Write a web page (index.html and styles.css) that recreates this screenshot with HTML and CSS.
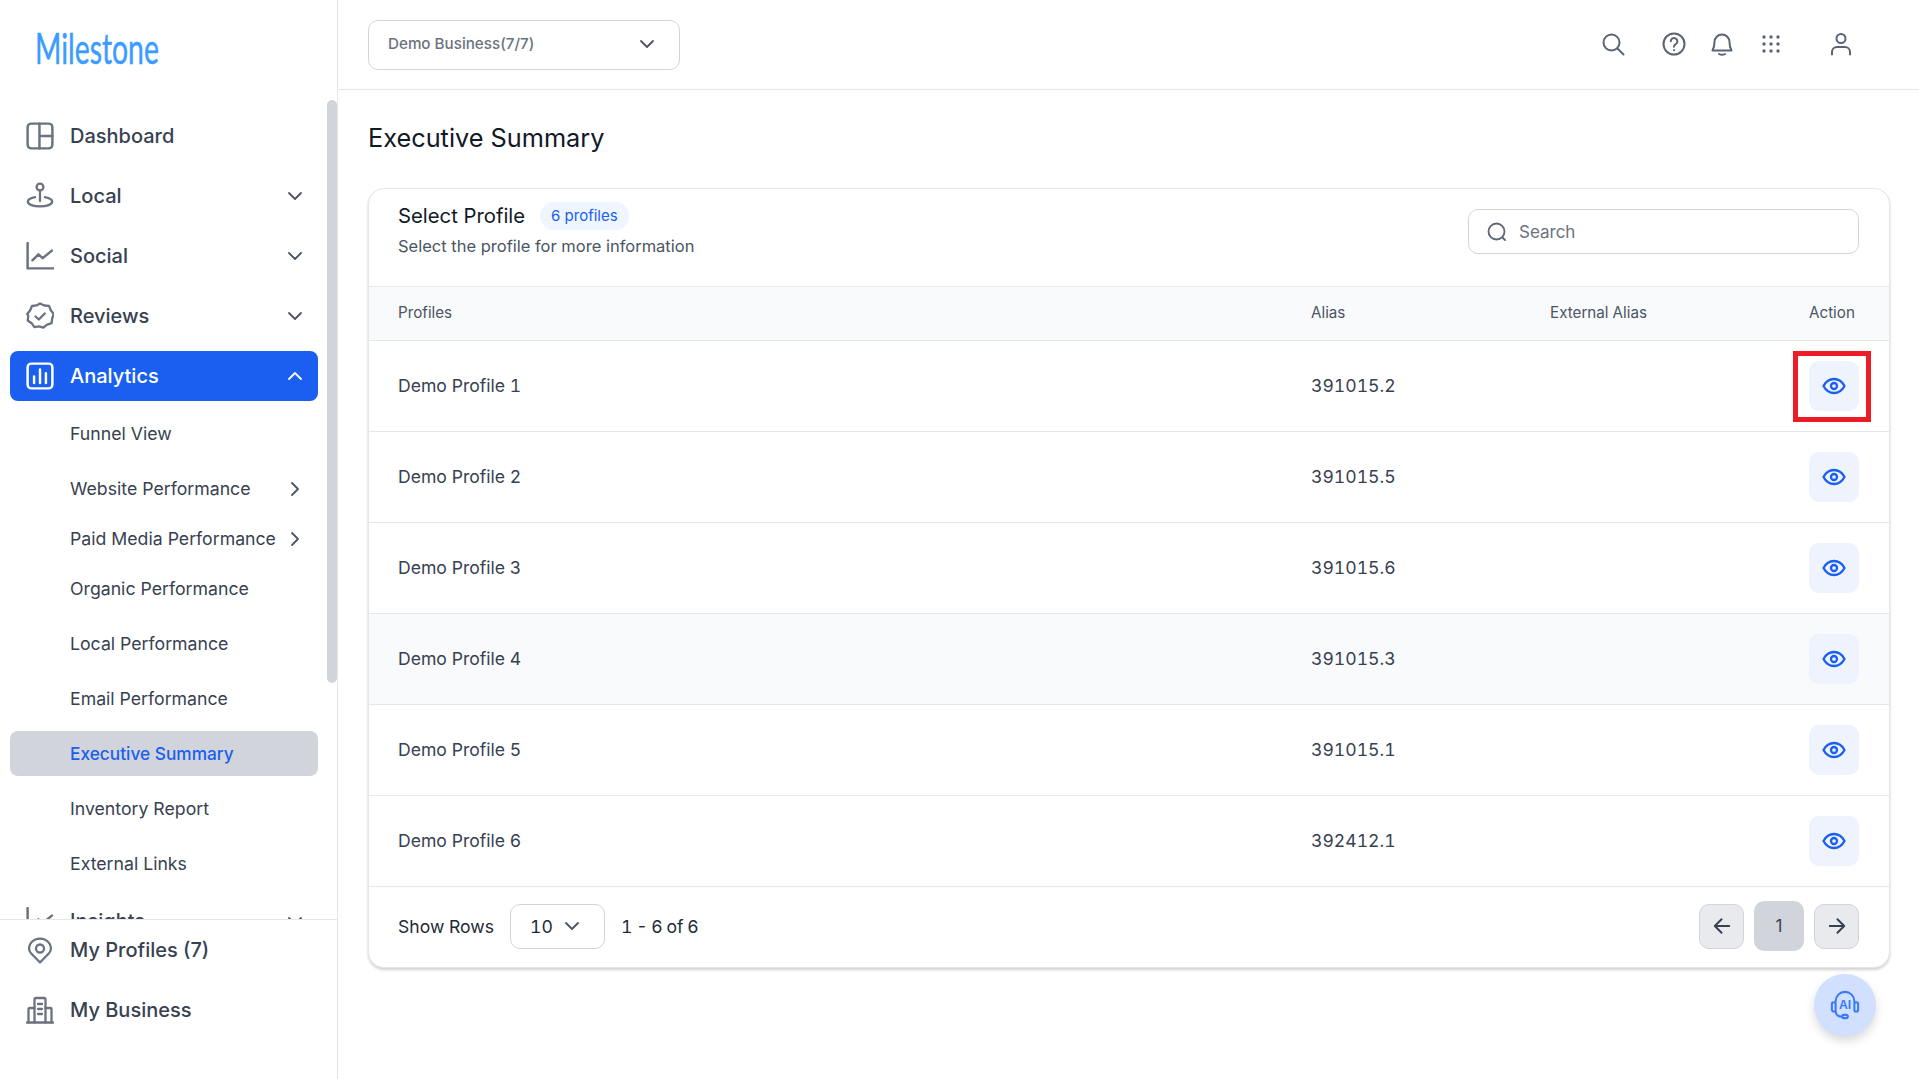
FILE: index.html
```html
<!DOCTYPE html>
<html lang="en">
<head>
    <meta charset="UTF-8">
    <meta name="viewport" content="width=device-width, initial-scale=1.0">
    <title>Executive Summary</title>
    <link rel="stylesheet" href="styles.css">
</head>
<body>
    <aside class="sidebar">
        <div class="logo"><span>Milestone</span></div>
        <nav class="nav">
            <a class="nav-item">
                <svg class="nav-icon" viewBox="0 0 26 26"><rect x="1.5" y="1.5" width="23" height="23" rx="3.5"/><path d="M12.5 1.5v23M12.5 13h12"/></svg>
                <span>Dashboard</span>
            </a>
            <a class="nav-item">
                <svg class="nav-icon" viewBox="0 0 28 28"><circle cx="14" cy="5" r="3.4"/><path d="M14 8.5V19"/><path d="M9 15.2c-4.400.8-7.200 2.400-7.200 4.600 0 2.600 5.400 4.600 12.200 4.600s12.200-2 12.200-4.600c0-2.200-2.800-3.800-7.200-4.600"/></svg>
                <span>Local</span>
                <svg class="chev" viewBox="0 0 16 16"><path d="M2 5l6 6 6-6"/></svg>
            </a>
            <a class="nav-item">
                <svg class="nav-icon" viewBox="0 0 26 26"><path d="M1.500 1v23.500H26"/><path d="M6 17l5.500-5.500 4 3.500L24 8"/></svg>
                <span>Social</span>
                <svg class="chev" viewBox="0 0 16 16"><path d="M2 5l6 6 6-6"/></svg>
            </a>
            <a class="nav-item">
                <svg class="nav-icon" viewBox="0 0 28 28"><path d="M14 1.500l4.300 2 4.700.4 1.800 4.400 3 3.700-1.600 4.500-.6 4.700-4.500 1.500-3.700 3-4.400-1.400-4.600.8-2.800-3.900-3.900-2.700.6-4.700L1.200 12l3-3.700L6 4l4.600-.6z"/><path d="M9.500 14.500l3.300 3 6-6"/></svg>
                <span>Reviews</span>
                <svg class="chev" viewBox="0 0 16 16"><path d="M2 5l6 6 6-6"/></svg>
            </a>
            <a class="nav-item active">
                <svg class="nav-icon" viewBox="0 0 26 26"><rect x="1.500" y="1.500" width="23" height="23" rx="3.500"/><path d="M7.500 19.500v-6M13 19.500V7M18.500 19.500v-9"/></svg>
                <span>Analytics</span>
                <svg class="chev" viewBox="0 0 16 16"><path d="M2 11l6-6 6 6"/></svg>
            </a>
            <a class="sub-item">Funnel View</a>
            <a class="sub-item has-child">Website Performance
                <svg class="chev side" viewBox="0 0 16 16"><path d="M5 2l6 6-6 6"/></svg>
            </a>
            <a class="sub-item has-child">Paid Media Performance
                <svg class="chev side" viewBox="0 0 16 16"><path d="M5 2l6 6-6 6"/></svg>
            </a>
            <a class="sub-item">Organic Performance</a>
            <a class="sub-item">Local Performance</a>
            <a class="sub-item">Email Performance</a>
            <a class="sub-item current">Executive Summary</a>
            <a class="sub-item">Inventory Report</a>
            <a class="sub-item">External Links</a>
            <a class="nav-item">
                <svg class="nav-icon" viewBox="0 0 26 26"><path d="M1.500 1v23.500H26"/><path d="M6 17l5.500-5.500 4 3.500L24 8"/></svg>
                <span>Insights</span>
                <svg class="chev" viewBox="0 0 16 16"><path d="M2 5l6 6 6-6"/></svg>
            </a>
        </nav>
        <div class="sidebar-foot">
            <a class="nav-item">
                <svg class="nav-icon" viewBox="0 0 28 28"><path d="M14 26.500l-9-9.200C2.200 14.300 2.500 9.200 5.500 6.200 10.200 1.500 17.800 1.500 22.500 6.200c3 3 3.300 8.100.5 11.100z"/><circle cx="14" cy="12.500" r="4"/></svg>
                <span>My Profiles (7)</span>
            </a>
            <a class="nav-item">
                <svg class="nav-icon" viewBox="0 0 28 28"><path d="M1 26.500h26"/><path d="M8.500 26.500V3.500a1.500 1.500 0 0 1 1.500-1.500h8a1.500 1.500 0 0 1 1.500 1.500v23"/><path d="M8.500 12H3.500a1 1 0 0 0-1 1v13.500M19.500 12h5a1 1 0 0 1 1 1v13.500"/><path d="M12 8h4M12 13h4M12 18h4"/></svg>
                <span>My Business</span>
            </a>
        </div>
        <div class="scroll-thumb"></div>
    </aside>

    <div class="main">
        <header class="topbar">
            <div class="biz-select">
                <span>Demo Business(7/7)</span>
                <svg class="chev" viewBox="0 0 16 16"><path d="M2 5l6 6 6-6"/></svg>
            </div>
            <div class="top-icons">
                <svg class="top-icon i-search" viewBox="0 0 24 24"><circle cx="10.500" cy="10.500" r="8"/><path d="M16.500 16.500l6 6"/></svg>
                <svg class="top-icon i-help" viewBox="0 0 24 24"><circle cx="12" cy="12" r="10.500"/><path d="M8.800 9.300a3.300 3.300 0 1 1 5 2.900c-1.100.7-1.800 1.300-1.800 2.600"/><path d="M12 18v.2"/></svg>
                <svg class="top-icon i-bell" viewBox="0 0 24 24"><path d="M4.500 10a7.500 7.500 0 0 1 15 0c0 4 .6 6 2 8.500h-19c1.400-2.500 2-4.500 2-8.500z"/><path d="M9 22c1.800 1 4.200 1 6 0"/></svg>
                <svg class="top-icon i-grid" viewBox="0 0 20 20"><g class="dots"><circle cx="3" cy="3" r="1.700"/><circle cx="10" cy="3" r="1.700"/><circle cx="17" cy="3" r="1.700"/><circle cx="3" cy="10" r="1.700"/><circle cx="10" cy="10" r="1.700"/><circle cx="17" cy="10" r="1.700"/><circle cx="3" cy="17" r="1.700"/><circle cx="10" cy="17" r="1.700"/><circle cx="17" cy="17" r="1.700"/></g></svg>
                <svg class="top-icon i-user" viewBox="0 0 24 24"><circle cx="12" cy="6.500" r="4.500"/><path d="M3 22.500v-2.500a5 5 0 0 1 5-5h8a5 5 0 0 1 5 5v2.500"/></svg>
            </div>
        </header>

        <main class="content">
            <h1>Executive Summary</h1>
            <section class="card">
                <div class="card-head">
                    <div>
                        <div class="card-title">
                            <h2>Select Profile</h2>
                            <span class="badge">6 profiles</span>
                        </div>
                        <p class="card-sub">Select the profile for more information</p>
                    </div>
                    <div class="search">
                        <svg viewBox="0 0 20 20"><circle cx="9.500" cy="9.500" r="8"/><path d="M15.500 15.500l2.500 2.500"/></svg>
                        <span>Search</span>
                    </div>
                </div>
                <div class="row head">
                    <div>Profiles</div>
                    <div>Alias</div>
                    <div>External Alias</div>
                    <div class="action-label">Action</div>
                </div>
                <div class="row">
                    <div class="cell">Demo Profile 1</div>
                    <div class="cell">391015.2</div>
                    <div></div>
                    <div class="action-cell">
                        <button class="eye-btn"><svg viewBox="0 0 24 24"><use href="#eye"/></svg></button>
                        <div class="marker"></div>
                    </div>
                </div>
                <div class="row">
                    <div class="cell">Demo Profile 2</div>
                    <div class="cell">391015.5</div>
                    <div></div>
                    <div class="action-cell"><button class="eye-btn"><svg viewBox="0 0 24 24"><use href="#eye"/></svg></button></div>
                </div>
                <div class="row">
                    <div class="cell">Demo Profile 3</div>
                    <div class="cell">391015.6</div>
                    <div></div>
                    <div class="action-cell"><button class="eye-btn"><svg viewBox="0 0 24 24"><use href="#eye"/></svg></button></div>
                </div>
                <div class="row hovered">
                    <div class="cell">Demo Profile 4</div>
                    <div class="cell">391015.3</div>
                    <div></div>
                    <div class="action-cell"><button class="eye-btn"><svg viewBox="0 0 24 24"><use href="#eye"/></svg></button></div>
                </div>
                <div class="row">
                    <div class="cell">Demo Profile 5</div>
                    <div class="cell">391015.1</div>
                    <div></div>
                    <div class="action-cell"><button class="eye-btn"><svg viewBox="0 0 24 24"><use href="#eye"/></svg></button></div>
                </div>
                <div class="row">
                    <div class="cell">Demo Profile 6</div>
                    <div class="cell">392412.1</div>
                    <div></div>
                    <div class="action-cell"><button class="eye-btn"><svg viewBox="0 0 24 24"><use href="#eye"/></svg></button></div>
                </div>
                <div class="card-foot">
                    <span>Show Rows</span>
                    <div class="rows-select">
                        <span>10</span>
                        <svg class="chev" viewBox="0 0 16 16"><path d="M2 5l6 6 6-6"/></svg>
                    </div>
                    <span class="range">1 - 6 of 6</span>
                    <div class="pager">
                        <button class="page-arrow"><svg viewBox="0 0 20 20"><path d="M18 10H2M9.500 2.500L2 10l7.500 7.500"/></svg></button>
                        <button class="page-num">1</button>
                        <button class="page-arrow"><svg viewBox="0 0 20 20"><path d="M2 10h16M10.500 2.500L18 10l-7.500 7.500"/></svg></button>
                    </div>
                </div>
            </section>
        </main>
    </div>

    <button class="ai-btn">
        <svg viewBox="0 0 32 32">
            <path d="M6 13v-1a10 10 0 0 1 20 0v1"/>
            <rect x="2" y="13" width="4" height="10" rx="2"/>
            <rect x="26" y="13" width="4" height="10" rx="2"/>
            <path d="M6 23c0 3.500 3 5.500 7 5.500"/>
            <rect x="13" y="26.500" width="6" height="3.500" rx="1.750"/>
            <text x="16" y="20" text-anchor="middle">AI</text>
        </svg>
    </button>

    <svg class="defs" width="0" height="0">
        <symbol id="eye" viewBox="0 0 24 24">
            <path d="M1.500 12C4 7.300 7.700 5 12 5s8 2.300 10.500 7C20 16.700 16.300 19 12 19S4 16.700 1.500 12z"/>
            <circle cx="12" cy="12" r="3"/>
        </symbol>
    </svg>
</body>
</html>
```

FILE: styles.css
```css
* {
    box-sizing: border-box;
    margin: 0;
    padding: 0;
}

html, body {
    height: 100%;
    overflow: hidden;
}

body {
    display: flex;
    font-family: Inter, 'Noto Sans', sans-serif;
    color: #1f2937;
    background: #fff;
    position: relative;
}

svg {
    fill: none;
    stroke: currentColor;
    stroke-linecap: round;
    stroke-linejoin: round;
    flex-shrink: 0;
}

.defs {
    position: absolute;
}

/* sidebar */
.sidebar {
    width: 338px;
    height: 100%;
    flex-shrink: 0;
    display: flex;
    flex-direction: column;
    border-right: 1px solid #e5e7eb;
    position: relative;
}

.logo {
    height: 100px;
    flex-shrink: 0;
    padding: 25px 0 0 35px;
}

.logo span {
    display: inline-block;
    font-family: Lato, sans-serif;
    font-size: 43px;
    line-height: 46px;
    color: #3b9cff;
    transform: scaleX(0.66);
    transform-origin: left center;
    -webkit-text-stroke: 0.5px #3b9cff;
}

.nav {
    height: 819px;
    overflow: hidden;
    padding: 11px 19px 0 10px;
    display: flex;
    flex-direction: column;
    gap: 10px;
    flex-shrink: 0;
}

.sidebar-foot {
    flex: 1;
    border-top: 1px solid #e5e7eb;
    padding: 5px 19px 0 10px;
    display: flex;
    flex-direction: column;
    gap: 10px;
}

.nav-item {
    height: 50px;
    flex-shrink: 0;
    display: flex;
    align-items: center;
    gap: 16px;
    padding: 0 15px 0 16px;
    border-radius: 8px;
    font-size: 20px;
    font-weight: 500;
    color: #374151;
}

.nav-item > span {
    flex: 1;
}

.nav-icon {
    width: 28px;
    height: 28px;
    color: #6b7280;
    stroke-width: 2.300;
}

.nav-item.active {
    background: #1a5ff0;
    color: #fff;
}

.nav-item.active .nav-icon,
.nav-item.active .chev {
    color: #fff;
}

.chev {
    width: 16px;
    height: 16px;
    color: #4b5563;
    stroke-width: 1.800;
}

.sub-item {
    height: 45px;
    flex-shrink: 0;
    display: flex;
    align-items: center;
    justify-content: space-between;
    padding: 0 15px 0 60px;
    border-radius: 8px;
    font-size: 17.700px;
    color: #374151;
}

.sub-item.has-child {
    margin-bottom: -5px;
}

.sub-item.current {
    background: #d1d5db;
    color: #1a5ff0;
    font-size: 17.300px;
    font-weight: 500;
}

.scroll-thumb {
    position: absolute;
    top: 100px;
    right: 0;
    width: 10px;
    height: 583px;
    background: #d1d5db;
    border-radius: 5px;
}

/* top bar */
.main {
    flex: 1;
    min-width: 0;
    display: flex;
    flex-direction: column;
}

.topbar {
    height: 90px;
    flex-shrink: 0;
    display: flex;
    align-items: flex-start;
    justify-content: space-between;
    padding: 20px 0 0 30px;
    border-bottom: 1px solid #e5e7eb;
}

.biz-select {
    width: 312px;
    height: 50px;
    display: flex;
    align-items: center;
    justify-content: space-between;
    padding: 0 24px 3px 19px;
    border: 1px solid #d1d5db;
    border-radius: 10px;
    font-size: 15.200px;
    font-weight: 500;
    color: #6b7280;
}

.top-icons {
    position: relative;
    width: 380px;
    height: 48px;
}

.top-icon {
    position: absolute;
    top: 12px;
    width: 24px;
    height: 24px;
    color: #5b6475;
    stroke-width: 2;
}

.i-search { left: 62px; }
.i-help { left: 123px; }
.i-bell { left: 171px; }
.i-grid { left: 222px; top: 14px; width: 20px; height: 20px; }
.i-user { left: 290px; }

.dots {
    fill: currentColor;
    stroke: none;
}

/* content */
.content {
    flex: 1;
    padding: 31px 29px 0 30px;
}

h1 {
    font-size: 25.300px;
    font-weight: 400;
    line-height: 34px;
    color: #111827;
    margin-bottom: 33px;
}

.card {
    height: 780px;
    border: 1px solid #e5e7eb;
    border-radius: 16px;
    box-shadow: 0 2px 3px rgba(0, 0, 0, 0.18);
    overflow: hidden;
    background: #fff;
}

.card-head {
    height: 98px;
    display: flex;
    justify-content: space-between;
    padding: 11px 30px 0 29px;
    border-bottom: 1px solid #e5e7eb;
}

.card-title {
    display: flex;
    align-items: center;
    gap: 15px;
}

h2 {
    font-size: 20.300px;
    font-weight: 400;
    color: #111827;
}

.badge {
    height: 28px;
    line-height: 28px;
    margin-top: 2px;
    padding: 0 11px;
    border-radius: 14px;
    background: #eff6ff;
    color: #1a5ff0;
    font-size: 15px;
}

.card-sub {
    margin-top: 6px;
    font-size: 16.500px;
    color: #4b5563;
}

.search {
    width: 391px;
    height: 45px;
    margin-top: 9px;
    display: flex;
    align-items: center;
    gap: 12px;
    padding: 0 18px;
    border: 1px solid #d1d5db;
    border-radius: 10px;
    font-size: 17px;
    color: #6b7280;
}

.search svg {
    width: 20px;
    height: 20px;
    stroke-width: 1.800;
    color: #5b6475;
}

.row {
    height: 91px;
    display: grid;
    grid-template-columns: 913px 239px 1fr 50px;
    align-items: center;
    padding: 0 30px 0 29px;
    border-bottom: 1px solid #e5e7eb;
    font-size: 17.600px;
    font-variant-numeric: tabular-nums;
    color: #374151;
}

.row .cell {
    padding-bottom: 2px;
}

.row.head {
    height: 54px;
    padding-bottom: 2px;
    background: #f9fafb;
    font-size: 15.200px;
    color: #4b5563;
}

.row.hovered {
    background: #f9fafb;
}

.action-label {
    white-space: nowrap;
}

.action-cell {
    position: relative;
}

.eye-btn {
    width: 50px;
    height: 50px;
    display: flex;
    align-items: center;
    justify-content: center;
    border: none;
    border-radius: 10px;
    background: #eff3fe;
    color: #1a5ff0;
}

.eye-btn svg {
    width: 24px;
    height: 24px;
    stroke-width: 2.300;
}

.marker {
    position: absolute;
    top: -10px;
    left: -16px;
    width: 78px;
    height: 71px;
    border: 5px solid #ed1c24;
}

.card-foot {
    height: 80px;
    display: flex;
    align-items: center;
    padding: 0 30px 2px 29px;
    font-size: 17.600px;
    font-variant-numeric: tabular-nums;
    color: #1f2937;
}

.rows-select {
    width: 95px;
    height: 45px;
    margin: 0 16px;
    display: flex;
    align-items: center;
    justify-content: space-between;
    padding: 0 24px 0 19px;
    border: 1px solid #d1d5db;
    border-radius: 10px;
}

.range {
    word-spacing: -1px;
}

.pager {
    margin-left: auto;
    display: flex;
    align-items: center;
    gap: 10px;
}

.page-arrow {
    width: 45px;
    height: 45px;
    display: flex;
    align-items: center;
    justify-content: center;
    background: #e9eaee;
    border: 1px solid #d1d5db;
    border-radius: 10px;
    color: #374151;
}

.page-arrow svg {
    width: 18px;
    height: 18px;
    stroke-width: 2.200;
}

.page-num {
    width: 50px;
    height: 50px;
    background: #d1d5db;
    border: none;
    border-radius: 10px;
    font-family: inherit;
    font-size: 17px;
    color: #374151;
}

.ai-btn {
    position: absolute;
    left: 1814px;
    top: 974px;
    width: 62px;
    height: 62px;
    display: flex;
    align-items: center;
    justify-content: center;
    border: none;
    border-radius: 50%;
    background: #d1e0ff;
    box-shadow: 0 5px 10px rgba(0, 0, 0, 0.15);
    color: #3b78ff;
}

.ai-btn svg {
    width: 30px;
    height: 30px;
    stroke-width: 2.200;
}

.ai-btn text {
    fill: currentColor;
    stroke: none;
    font-family: 'Liberation Sans', sans-serif;
    font-size: 13px;
    font-weight: 700;
}
```
